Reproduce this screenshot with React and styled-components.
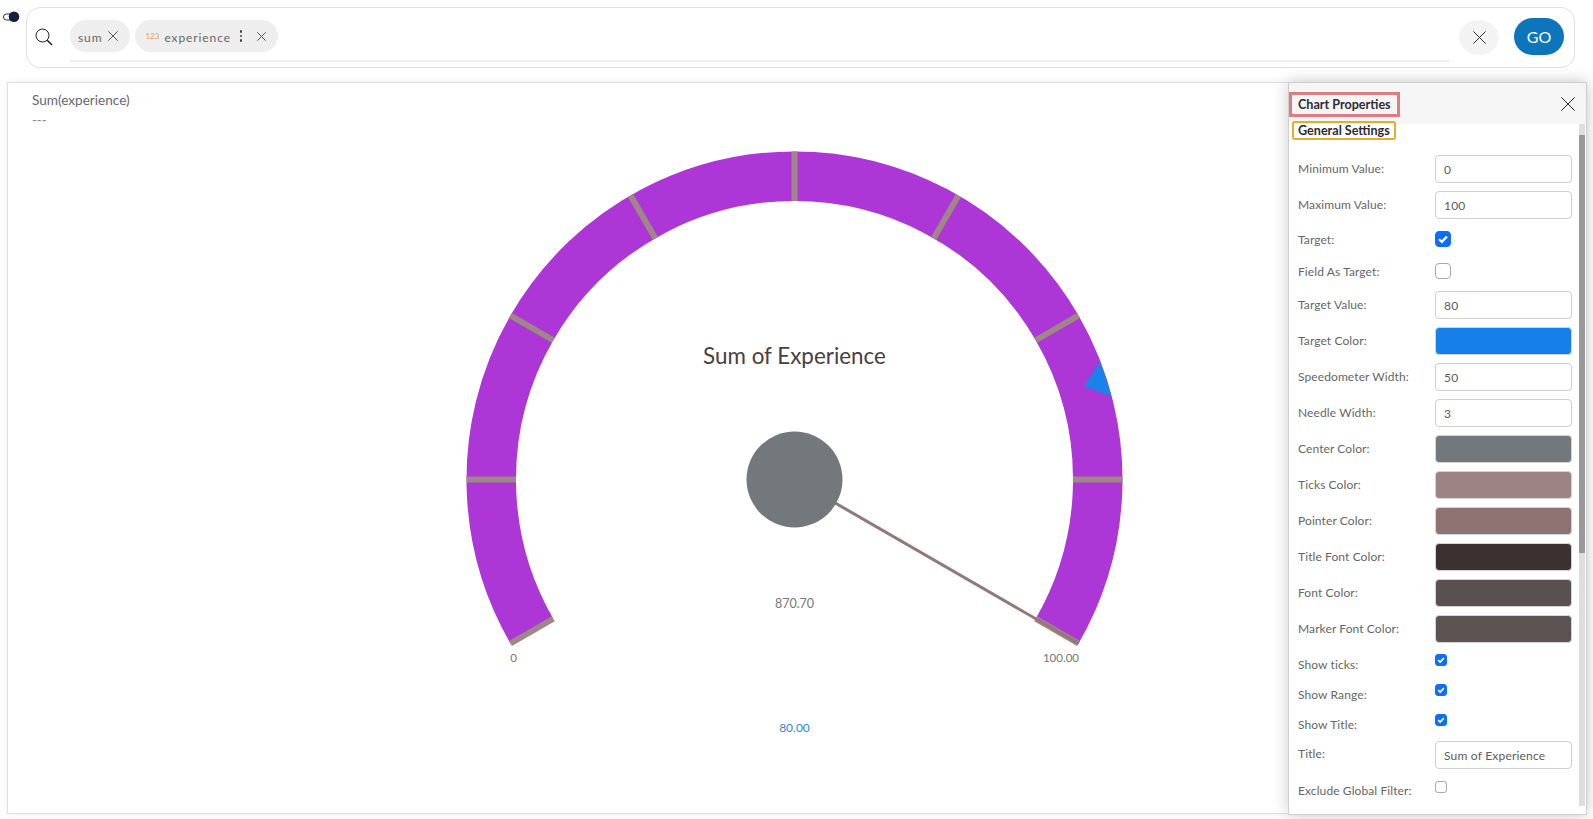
import React from "react";
import styled, { createGlobalStyle } from "styled-components";

const GlobalStyle = createGlobalStyle`
  html, body {
    margin: 0;
    padding: 0;
    height: 100%;
    overflow: hidden;
    background: #fff;
    font-family: "Lato", "Noto Sans", sans-serif;
  }
  * { box-sizing: border-box; }
`;

const Page = styled.div`
  position: relative;
  width: 1593px;
  height: 819px;
  padding: 7px 18px 0 7px;
  overflow: hidden;
`;

const TopRow = styled.div`
  display: flex;
  align-items: flex-start;
  height: 75px;
`;

const ToggleWrap = styled.div`
  width: 23px;
  margin-left: -4px;
  flex: none;
  line-height: 0;
`;

const SearchBar = styled.div`
  flex: 1;
  height: 61px;
  border: 1px solid #e2e2e2;
  border-radius: 14px;
  display: flex;
  align-items: flex-start;
  padding: 12px 10px 0 8px;
`;

const SearchIconWrap = styled.div`
  width: 35px;
  padding-top: 8px;
  flex: none;
  line-height: 0;
`;

const ChipArea = styled.div`
  flex: 1;
  height: 42px;
  border-bottom: 2px solid #eeeeee;
  display: flex;
  gap: 5px;
  align-items: flex-start;
`;

const Chip = styled.div`
  height: 32px;
  border-radius: 16px;
  background: #eeeeee;
  display: flex;
  align-items: center;
  padding: ${(p) => p.$padding};
  color: #666;
  font-size: 12px;
  letter-spacing: 0.9px;
`;

const ChipText = styled.span`
  padding-top: 2px;
  margin-right: ${(p) => p.$gap || 0}px;
`;

const NumTag = styled.span`
  color: #ee9a5c;
  font-size: 8px;
  letter-spacing: 0;
  margin-right: 5px;
`;

const Dots = styled.span`
  display: flex;
  flex-direction: column;
  gap: 2px;
  margin: 0 15px 0 9px;

  i {
    width: 2.5px;
    height: 2.5px;
    border-radius: 50%;
    background: #444;
  }
`;

const ClearButton = styled.button`
  width: 40px;
  height: 35px;
  margin: 0 15px 0 10px;
  padding: 0;
  flex: none;
  border: none;
  border-radius: 50%;
  background: #f3f3f3;
  display: flex;
  align-items: center;
  justify-content: center;
`;

const GoButton = styled.button`
  width: 50px;
  height: 37px;
  margin-top: -2px;
  flex: none;
  padding: 0;
  border: none;
  border-radius: 20px;
  background: #0c75bb;
  color: #fff;
  font-family: inherit;
  font-size: 16px;
`;

const ChartCard = styled.div`
  height: 732px;
  width: 1578px;
  border: 1px solid #dedede;
  margin-right: -10px;
  box-shadow: 0 0 8px rgba(0, 0, 0, 0.06);
`;

const ChartHead = styled.div`
  height: 50px;
  padding: 9px 0 0 24px;
  color: #6a6572;
  font-size: 13.6px;
`;

const ChartSub = styled.div`
  margin-top: 4px;
  color: #888;
  font-size: 13px;
  line-height: 16px;
`;

const GaugeSvg = styled.svg`
  display: block;
  width: 1576px;
  height: 680px;

  text {
    font-family: "Lato", "Noto Sans", sans-serif;
    text-anchor: middle;
  }
`;

const Panel = styled.aside`
  position: absolute;
  top: 82px;
  left: 1288px;
  width: 299px;
  height: 733px;
  background: #fff;
  border: 1px solid #cfcfcf;
  box-shadow: 0 0 16px rgba(0, 0, 0, 0.2);
  display: flex;
  flex-direction: column;
`;

const PanelHead = styled.div`
  height: 41px;
  flex: none;
  background: #f5f5f5;
  display: flex;
  align-items: center;
  justify-content: space-between;
  padding: 0 11px 0 0;
`;

const PanelTitle = styled.div`
  border: 3px solid #e07b80;
  height: 25px;
  padding: 0 6px;
  margin-top: 1px;
  display: flex;
  align-items: center;
  font-size: 12.6px;
  font-weight: 700;
  color: #2c2c36;
`;

const PanelMain = styled.div`
  flex: 1;
  display: flex;
  min-height: 0;
`;

const PanelBody = styled.div`
  flex: 1;
  min-width: 0;
  padding: 0 0 0 3px;
`;

const SectionTag = styled.div`
  width: 104px;
  height: 19px;
  margin: -3px 0 11px 0;
  border: 2px solid #e9ab2c;
  border-radius: 3px;
  padding: 0 0 0 4px;
  display: flex;
  align-items: center;
  font-size: 12.6px;
  font-weight: 700;
  color: #2c2c36;
  white-space: nowrap;
`;

const Row = styled.div`
  height: ${(p) => p.$height || 36}px;
  display: grid;
  grid-template-columns: 137px 137px;
  padding-left: 6px;
  align-items: center;
`;

const Label = styled.span`
  font-size: 12px;
  color: #666;
  letter-spacing: 0.1px;
  white-space: nowrap;
  transform: translateY(${(p) => p.$shift ?? -1}px);
`;

const TextInput = styled.input`
  width: 137px;
  height: 28px;
  border: 1px solid #cfcfcf;
  border-radius: 4px;
  padding: 0 8px;
  font-family: inherit;
  font-size: 12px;
  letter-spacing: 0.2px;
  color: #5c5c5c;
  outline: none;
`;

const Swatch = styled.div`
  width: 137px;
  height: 28px;
  border: 1px solid #d4d4d4;
  border-radius: 4px;
  background: ${(p) => p.$color};
`;

const Check = styled.span`
  width: ${(p) => p.$size}px;
  height: ${(p) => p.$size}px;
  border-radius: ${(p) => (p.$size > 12 ? 4 : 3)}px;
  border: 1px solid ${(p) => (p.$on ? "#0d6efd" : "#a9a9a9")};
  background: ${(p) => (p.$on ? "#0d6efd" : "#fff")};
  display: flex;
  align-items: center;
  justify-content: center;
  transform: translateY(${(p) => p.$shift || 0}px);
`;

const ScrollTrack = styled.div`
  width: 6px;
  flex: none;
  height: 682px;
  margin-right: 1px;
  background: #dedede;
`;

const ScrollThumb = styled.div`
  height: 418px;
  margin-top: 11px;
  background: #999;
`;

const CloseIcon = ({ size = 10, color = "#444", width = 1 }) => (
  <svg width={size} height={size} viewBox="0 0 10 10" fill="none">
    <path
      d="M0.3 0.3 9.7 9.7M9.7 0.3 0.3 9.7"
      stroke={color}
      strokeWidth={(width * 10) / size}
    />
  </svg>
);

const TickMark = ({ size }) => (
  <svg width={size} height={size} viewBox="0 0 12 12" fill="none">
    <path d="M2.6 6.2 5 8.5 9.4 3.8" stroke="#fff" strokeWidth="2" />
  </svg>
);

const CX = 794.5;
const CY = 479.5;
const OUTER = 328;
const INNER = 278.5;

// angle is measured from straight up, clockwise
const polar = (r, deg) => {
  const a = (deg * Math.PI) / 180;
  return [CX + r * Math.sin(a), CY - r * Math.cos(a)];
};

const Gauge = () => {
  const mid = (OUTER + INNER) / 2;
  const [sx, sy] = polar(mid, -120);
  const [ex, ey] = polar(mid, 120);
  const ticks = [-120, -90, -60, -30, 0, 30, 60, 90, 120];
  const [tipX, tipY] = polar(OUTER, 120);
  return (
    <GaugeSvg viewBox="8 133 1576 680">
      <path
        d={`M${sx} ${sy} A${mid} ${mid} 0 1 1 ${ex} ${ey}`}
        fill="none"
        stroke="#ad36d6"
        strokeWidth={OUTER - INNER}
      />
      {ticks.map((deg) => {
        const [x1, y1] = polar(INNER, deg);
        const [x2, y2] = polar(OUTER, deg);
        return <line key={deg} x1={x1} y1={y1} x2={x2} y2={y2} stroke="#a08686" strokeWidth="6" />;
      })}
      <path d={`M1084 386 L1100 361.7 A${OUTER} ${OUTER} 0 0 1 1111.7 396.7 Z`} fill="#1a82e8" />
      <line x1={CX} y1={CY} x2={tipX} y2={tipY} stroke="#927878" strokeWidth="3" />
      <circle cx={CX} cy={CY} r="48" fill="#73787c" />
      <text x={CX} y="364" fontSize="22.4" fill="#4a4040">Sum of Experience</text>
      <text x={CX} y="608" fontSize="12.5" fill="#777">870.70</text>
      <text x="513.5" y="662" fontSize="11.5" fill="#777">0</text>
      <text x="1061" y="662" fontSize="11.5" fill="#777">100.00</text>
      <text x={CX} y="732" fontSize="12" fill="#2a88e0">80.00</text>
    </GaugeSvg>
  );
};

const settings = [
  { label: "Minimum Value:", value: "0" },
  { label: "Maximum Value:", value: "100" },
  { label: "Target:", check: true, size: 16, height: 32, text: 0 },
  { label: "Field As Target:", check: false, size: 16, height: 32, text: 0 },
  { label: "Target Value:", value: "80" },
  { label: "Target Color:", color: "#1680e8" },
  { label: "Speedometer Width:", value: "50" },
  { label: "Needle Width:", value: "3" },
  { label: "Center Color:", color: "#73787c" },
  { label: "Ticks Color:", color: "#9c8484" },
  { label: "Pointer Color:", color: "#8f7272" },
  { label: "Title Font Color:", color: "#3c3030" },
  { label: "Font Color:", color: "#595050" },
  { label: "Marker Font Color:", color: "#5c5252" },
  { label: "Show ticks:", check: true, size: 12, height: 30, box: -2, text: 2 },
  { label: "Show Range:", check: true, size: 12, height: 30, box: -2, text: 2 },
  { label: "Show Title:", check: true, size: 12, height: 30, box: -2, text: 2 },
  { label: "Title:", value: "Sum of Experience", text: -2 },
  { label: "Exclude Global Filter:", check: false, size: 12, height: 32, box: -2, text: 1 },
];

const App = () => {
  return (
    <Page>
      <GlobalStyle />
      <TopRow>
        <ToggleWrap>
          <svg width="20" height="20" viewBox="0 0 20 20">
            <rect x="0.5" y="7" width="12" height="6" rx="3" fill="none" stroke="#333" strokeWidth="1" />
            <circle cx="11" cy="9.7" r="5.3" fill="#14213a" />
          </svg>
        </ToggleWrap>
        <SearchBar>
          <SearchIconWrap>
            <svg width="18" height="18" viewBox="0 0 18 18" fill="none" stroke="#222">
              <circle cx="7.5" cy="7.5" r="6.5" strokeWidth="1" />
              <path d="M12.2 12.2 17 17" strokeWidth="1.6" />
            </svg>
          </SearchIconWrap>
          <ChipArea>
            <Chip $padding="0 12px 0 8px">
              <ChipText $gap={6}>sum</ChipText>
              <CloseIcon size={10} color="#555" />
            </Chip>
            <Chip $padding="0 12px 0 10px">
              <NumTag>123</NumTag>
              <ChipText>experience</ChipText>
              <Dots><i /><i /><i /></Dots>
              <CloseIcon size={9} color="#555" />
            </Chip>
          </ChipArea>
          <ClearButton>
            <CloseIcon size={13} color="#333" />
          </ClearButton>
          <GoButton>GO</GoButton>
        </SearchBar>
      </TopRow>
      <ChartCard>
        <ChartHead>
          Sum(experience)
          <ChartSub>---</ChartSub>
        </ChartHead>
        <Gauge />
      </ChartCard>
      <Panel>
        <PanelHead>
          <PanelTitle>Chart Properties</PanelTitle>
          <CloseIcon size={14} color="#222" />
        </PanelHead>
        <PanelMain>
          <PanelBody>
            <SectionTag>General Settings</SectionTag>
            {settings.map((s) => (
              <Row key={s.label} $height={s.height}>
                <Label $shift={s.text}>{s.label}</Label>
                {s.value !== undefined && <TextInput readOnly value={s.value} />}
                {s.color && <Swatch $color={s.color} />}
                {s.check !== undefined && (
                  <Check $size={s.size} $on={s.check} $shift={s.box}>
                    {s.check && <TickMark size={s.size - 2} />}
                  </Check>
                )}
              </Row>
            ))}
          </PanelBody>
          <ScrollTrack>
            <ScrollThumb />
          </ScrollTrack>
        </PanelMain>
      </Panel>
    </Page>
  );
};

export default App;
